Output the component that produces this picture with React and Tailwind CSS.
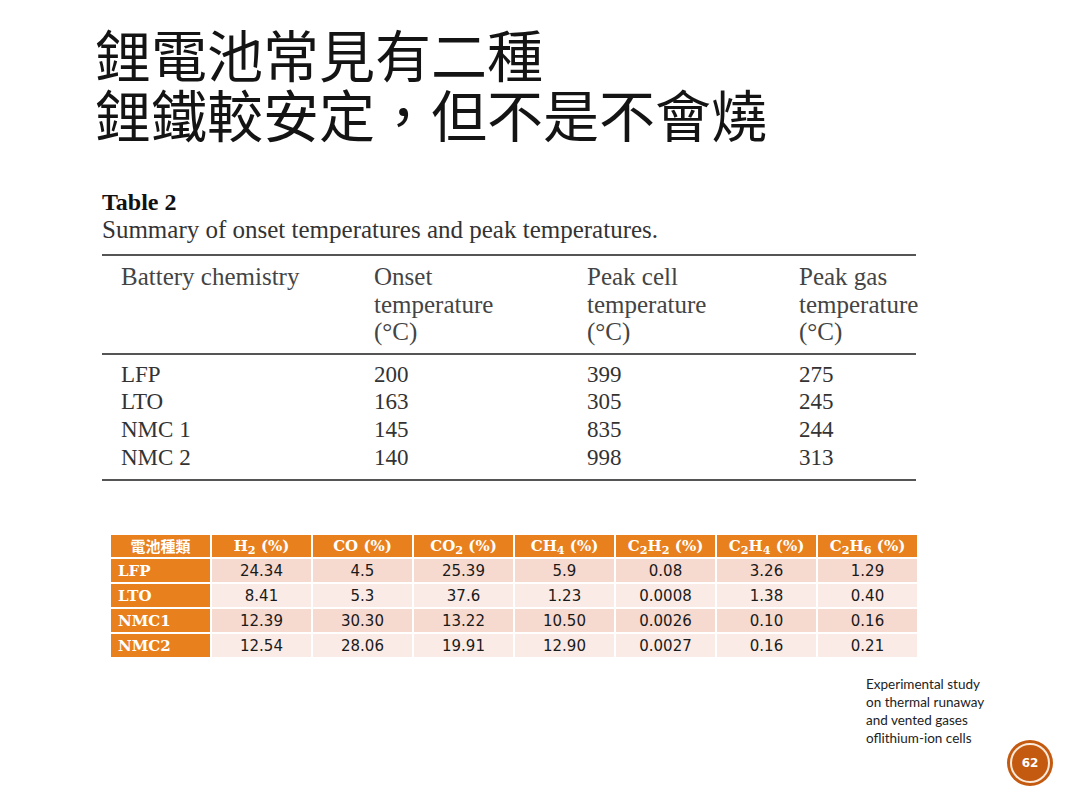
const rows = [
  ["LFP", "200", "399", "275"],
  ["LTO", "163", "305", "245"],
  ["NMC 1", "145", "835", "244"],
  ["NMC 2", "140", "998", "313"],
];

const gasHead = [
  <>H<sub>2</sub> (%)</>,
  <>CO (%)</>,
  <>CO<sub>2</sub> (%)</>,
  <>CH<sub>4</sub> (%)</>,
  <>C<sub>2</sub>H<sub>2</sub> (%)</>,
  <>C<sub>2</sub>H<sub>4</sub> (%)</>,
  <>C<sub>2</sub>H<sub>6</sub> (%)</>,
];

const gasRows = [
  ["LFP", "24.34", "4.5", "25.39", "5.9", "0.08", "3.26", "1.29"],
  ["LTO", "8.41", "5.3", "37.6", "1.23", "0.0008", "1.38", "0.40"],
  ["NMC1", "12.39", "30.30", "13.22", "10.50", "0.0026", "0.10", "0.16"],
  ["NMC2", "12.54", "28.06", "19.91", "12.90", "0.0027", "0.16", "0.21"],
];

const serif = "font-['Liberation_Serif',serif]";

const App = () => {
  return (
    <div className="w-[1080px] h-[810px] bg-white overflow-hidden">
      {/* title */}
      <div className="pt-[23px] pl-[95px] font-['Noto_Sans_CJK_TC',sans-serif] text-[56px] leading-[60px] text-[#141414] font-normal">
        <div>鋰電池常見有二種</div>
        <div>鋰鐵較安定，但不是不會燒</div>
      </div>

      {/* Table 2 */}
      <div className={`ml-[102px] w-[814px] mt-[45px] text-[#2e2e2e] ${serif}`}>
        <div className="text-[24px] leading-[28px] font-bold text-[#111]">Table 2</div>
        <div className="text-[25px] leading-[28px] text-[#333]">
          Summary of onset temperatures and peak temperatures.
        </div>
        <div className="mt-[10px] border-t-2 border-[#555]" />
        <div className="grid grid-cols-[253px_213px_212px_1fr] text-[25px] leading-[27.5px] text-[#444] pt-[7px] pb-[7px]">
          <div className="pl-[19px]">Battery chemistry</div>
          <div className="pl-[19px] whitespace-nowrap">Onset<br />temperature<br />(°C)</div>
          <div className="pl-[19px] whitespace-nowrap">Peak cell<br />temperature<br />(°C)</div>
          <div className="pl-[19px] whitespace-nowrap">Peak gas<br />temperature<br />(°C)</div>
        </div>
        <div className="border-t-2 border-[#555]" />
        <div className="pt-[6px] pb-[8px] text-[23px] leading-[27.7px] text-[#333]">
          {rows.map((r) => (
            <div key={r[0]} className="grid grid-cols-[253px_213px_212px_1fr]">
              {r.map((c, i) => (
                <div key={i} className="pl-[19px]">{c}</div>
              ))}
            </div>
          ))}
        </div>
        <div className="border-t-2 border-[#555]" />
      </div>

      {/* gas table */}
      <div className="ml-[111px] mt-[54px] w-fit grid grid-cols-[99px_repeat(7,99px)] gap-[2px]">
        <div className="h-[22px] bg-[#e8801e] text-white font-bold text-[15px] flex items-center justify-center font-['Noto_Sans_CJK_TC',serif]">
          電池種類
        </div>
        {gasHead.map((h, i) => (
          <div
            key={i}
            className="h-[22px] bg-[#e8801e] text-white font-bold text-[15px] flex items-center justify-center font-['DejaVu_Serif',serif] whitespace-nowrap"
          >
            <span>{h}</span>
          </div>
        ))}
        {gasRows.map((r, ri) =>
          r.map((c, i) =>
            i === 0 ? (
              <div
                key={ri + "-" + i}
                className="h-[23px] bg-[#e8801e] text-white font-bold text-[15px] flex items-center pl-[7px] font-['DejaVu_Serif',serif]"
              >
                {c}
              </div>
            ) : (
              <div
                key={ri + "-" + i}
                className={`h-[23px] flex items-center justify-center text-[15px] text-[#1a1a1a] font-['DejaVu_Sans',sans-serif] ${
                  ri % 2 === 0 ? "bg-[#f6d9cf]" : "bg-[#fbebe6]"
                }`}
              >
                {c}
              </div>
            )
          )
        )}
      </div>

      {/* source + page number */}
      <div className="flex ml-[866px] mt-[18px]">
        <div className="w-[141px] font-['Lato',sans-serif] text-[13.5px] leading-[18px] text-[#222]">
          Experimental study
          <br />
          on thermal runaway
          <br />
          and vented gases
          <br />
          oflithium-ion cells
        </div>
        <div className="mt-[65px] w-[46px] h-[46px] rounded-full bg-[#c45a10] flex items-center justify-center">
          <div className="w-[40px] h-[40px] rounded-full border-2 border-[#fbe9da] flex items-center justify-center text-white font-bold text-[12px] font-['DejaVu_Sans',sans-serif]">
            62
          </div>
        </div>
      </div>
    </div>
  );
};

export default App;
